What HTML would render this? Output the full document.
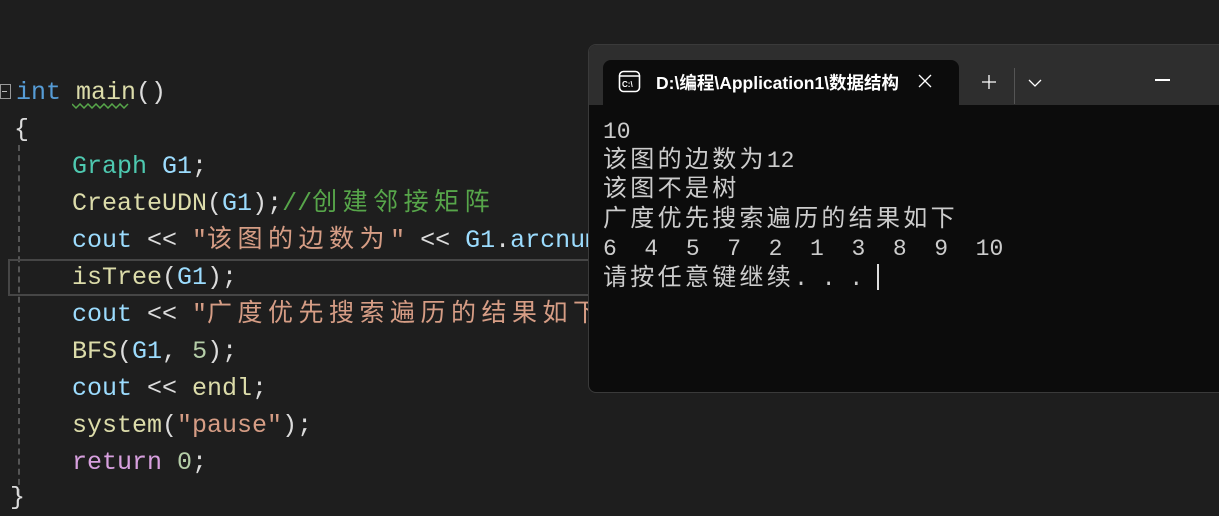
<!DOCTYPE html>
<html><head><meta charset="utf-8"><style>
html,body{margin:0;padding:0;width:1219px;height:499px;overflow:hidden;background:#1e1e1e;}
.code{position:absolute;left:0;top:0;font-family:"Liberation Mono","Noto Sans CJK SC",monospace;font-size:25px;color:#dcdcdc;}
.ln{position:absolute;white-space:pre;height:37px;line-height:37px;}
.cj{letter-spacing:5.5px;}
.kw{color:#569cd6}.fn{color:#dcdcaa}.ty{color:#4ec9b0}.va{color:#9cdcfe}.st{color:#d69d85}.cm{color:#57a64a}.ctl{color:#d8a0df}.num{color:#b5cea8}
.term{position:absolute;left:588px;top:44px;width:640px;height:347px;background:#0c0c0c;border:1px solid #3a3a3a;border-radius:8px 0 0 8px;overflow:hidden;}
.bar{position:absolute;left:0;top:0;right:0;height:60px;background:#2e2e2e;}
.tab{position:absolute;left:14px;top:15px;width:356px;height:50px;background:#0c0c0c;border-radius:8px 8px 0 0;}
.tt{position:absolute;left:53px;top:10px;color:#fff;font:bold 17.5px "Liberation Sans","Noto Sans CJK SC",sans-serif;white-space:nowrap;width:242px;overflow:hidden;}
.o{position:absolute;left:14px;font-family:"Liberation Mono","Noto Sans CJK SC",monospace;font-size:23px;color:#cccccc;white-space:pre;height:29px;line-height:29px;}
.o .c{font-size:24px;letter-spacing:3.3px}
</style></head><body>
<div class="code">
<div style="position:absolute;left:0;top:84px;width:9px;height:13px;border:1px solid #999;"></div>
<div style="position:absolute;left:2px;top:91px;width:5px;height:1px;background:#bbb"></div>
<div class="ln" style="left:16px;top:74px"><span class="kw">int</span> <span class="fn">main</span>()</div>
<svg style="position:absolute;left:72px;top:103px" width="58" height="6"><path d="M0 1 L4 5 L8 1 L12 5 L16 1 L20 5 L24 1 L28 5 L32 1 L36 5 L40 1 L44 5 L48 1 L52 5 L56 1" stroke="#57a64a" stroke-width="1.5" fill="none"/></svg>
<div class="ln" style="left:14px;top:111px">{</div>
<div style="position:absolute;left:18px;top:145px;height:350px;border-left:2px dashed #555"></div>
<div style="position:absolute;left:8px;top:259px;width:600px;height:33px;border:2px solid #464646"></div>
<div class="ln" style="left:72px;top:148px"><span class="ty">Graph</span> <span class="va">G1</span>;</div>
<div class="ln" style="left:72px;top:185px"><span class="fn">CreateUDN</span>(<span class="va">G1</span>);<span class="cm">//<span class="cj">创建邻接矩阵</span></span></div>
<div class="ln" style="left:72px;top:222px"><span class="va">cout</span> &lt;&lt; <span class="st">"<span class="cj">该图的边数为</span>"</span> &lt;&lt; <span class="va">G1</span>.<span class="va">arcnum</span></div>
<div class="ln" style="left:72px;top:259px"><span class="fn">isTree</span>(<span class="va">G1</span>);</div>
<div class="ln" style="left:72px;top:296px"><span class="va">cout</span> &lt;&lt; <span class="st">"<span class="cj">广度优先搜索遍历的结果如下</span></span></div>
<div class="ln" style="left:72px;top:333px"><span class="fn">BFS</span>(<span class="va">G1</span>, <span class="num">5</span>);</div>
<div class="ln" style="left:72px;top:370px"><span class="va">cout</span> &lt;&lt; <span class="fn">endl</span>;</div>
<div class="ln" style="left:72px;top:407px"><span class="fn">system</span>(<span class="st">"pause"</span>);</div>
<div class="ln" style="left:72px;top:444px"><span class="ctl">return</span> <span class="num">0</span>;</div>
<div class="ln" style="left:10px;top:479px">}</div>
</div>
<div class="term">
<div class="bar"></div>
<div class="tab">
<svg style="position:absolute;left:15px;top:10px" width="24" height="24"><rect x="1.5" y="1.5" width="20" height="20" rx="4" fill="none" stroke="#fff" stroke-width="1.6"/><line x1="1.5" y1="6" x2="21.5" y2="6" stroke="#fff" stroke-width="1.6"/><text x="4" y="17" font-size="8" fill="#fff" font-family="Liberation Sans" font-weight="bold">C:\</text></svg>
<div class="tt">D:\编程\Application1\数据结构</div>
<svg style="position:absolute;left:315px;top:14px" width="14" height="14"><path d="M1 1L13 13M13 1L1 13" stroke="#fff" stroke-width="1.3"/></svg>
</div>
<svg style="position:absolute;left:392px;top:29px" width="16" height="16"><path d="M8 1V15M1 8H15" stroke="#fff" stroke-width="1.3"/></svg>
<div style="position:absolute;left:425px;top:23px;width:1px;height:36px;background:#555"></div>
<svg style="position:absolute;left:439px;top:34px" width="14" height="9"><path d="M1 1L7 7L13 1" stroke="#fff" stroke-width="1.3" fill="none"/></svg>
<div style="position:absolute;left:566px;top:34px;width:15px;height:1.5px;background:#fff"></div>
<div class="o" style="top:73px">10</div>
<div class="o" style="top:102px"><span class="c">该图的边数为</span>12</div>
<div class="o" style="top:131px"><span class="c">该图不是树</span></div>
<div class="o" style="top:161px"><span class="c">广度优先搜索遍历的结果如下</span></div>
<div class="o" style="top:190px">6  4  5  7  2  1  3  8  9  10</div>
<div class="o" style="top:219px"><span class="c">请按任意键继续</span>. . . <span style="display:inline-block;width:2px;height:26px;background:#ddd;vertical-align:-5px"></span></div>
</div>
</body></html>
